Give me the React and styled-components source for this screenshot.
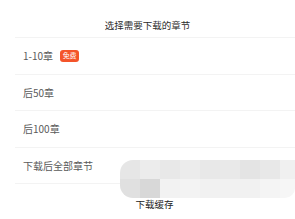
import React from 'react';
import styled, { createGlobalStyle } from 'styled-components';

const GlobalStyle = createGlobalStyle`
  html, body {
    margin: 0;
    padding: 0;
    background: #fff;
  }
  body {
    font-family: "Noto Sans CJK SC", "Noto Sans", sans-serif;
    -webkit-font-smoothing: antialiased;
  }
`

const Sheet = styled.div`
  position: relative;
  width: 295px;
  height: 219px;
  overflow: hidden;
  background: #fff;
`

const Title = styled.div`
  height: 37px;
  box-sizing: border-box;
  display: flex;
  align-items: flex-end;
  justify-content: center;
  padding-bottom: 6px;
  font-size: 9.5px;
  line-height: 12px;
  color: #2b2b2b;
`

const List = styled.div`
  margin-left: 15px;
  border-bottom: 1px solid #f3f3f3;
`

const Row = styled.div`
  height: 36.6px;
  box-sizing: border-box;
  border-top: 1px solid #f3f3f3;
  padding-left: 8px;
  display: flex;
  align-items: center;
  gap: 7px;
  font-size: 10px;
  color: #5a5a5a;
`

const Badge = styled.span`
  display: inline-flex;
  align-items: center;
  justify-content: center;
  width: 19px;
  height: 12px;
  border-radius: 3px;
  background: #f4542a;
  color: #fff;
  font-size: 7px;
  line-height: 1;
`

const Footer = styled.div`
  margin-top: 14px;
  padding-left: 14px;
  text-align: center;
  font-size: 9.5px;
  line-height: 12px;
  color: #222;
`

const Mosaic = styled.div`
  position: absolute;
  left: 120px;
  top: 160px;
  width: 175px;
  height: 38px;
  display: grid;
  grid-template-columns: repeat(9, 20px);
  grid-template-rows: 19px 19px;
  border-radius: 13px 0 10px 13px;
  overflow: hidden;
`

const Tile = styled.div`
  background: ${(p) => p.$c};
`

const topTiles = ['#e6e6e6', '#ececec', '#e8e8e8', '#ececec', '#e8e8e8', '#e9e9e9', '#e4e4e4', '#e8e8e8', '#f0f0f0'];
const bottomTiles = ['#e0e0e0', '#d8d8d8', '#f2f2f2', '#f3f3f3', '#f1f1f1', '#f1f1f1', '#f1f1f1', '#f4f4f4', '#f6f6f6'];

const rows = ['1-10章', '后50章', '后100章', '下载后全部章节'];

export default function App() {
  return (
    <Sheet>
      <GlobalStyle />
      <Title>选择需要下载的章节</Title>
      <List>
        {rows.map((r, i) => (
          <Row key={r}>
            <span>{r}</span>
            {i === 0 && <Badge>免费</Badge>}
          </Row>
        ))}
      </List>
      <Footer>下载缓存</Footer>
      <Mosaic>
        {topTiles.concat(bottomTiles).map((c, i) => (
          <Tile key={i} $c={c} />
        ))}
      </Mosaic>
    </Sheet>
  );
}
